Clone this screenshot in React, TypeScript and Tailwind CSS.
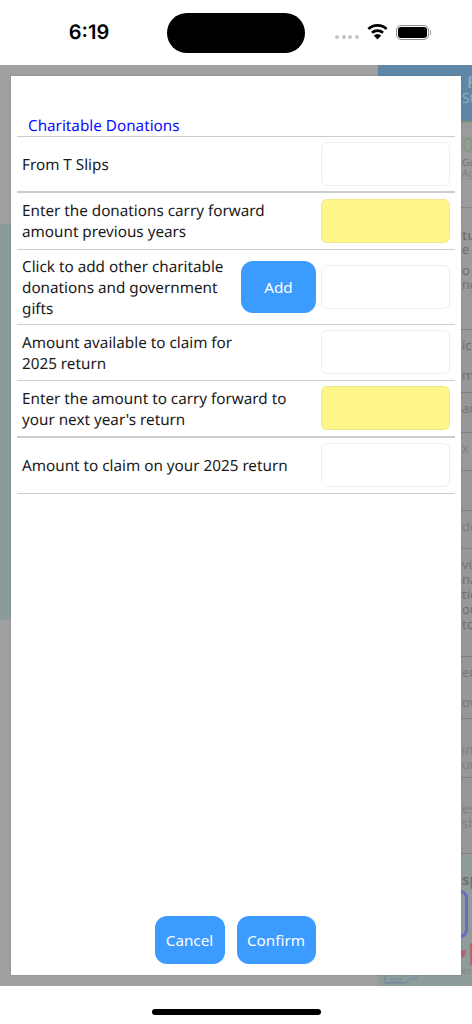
import React from "react";

const font = "font-['Noto_Sans',sans-serif] [text-rendering:geometricPrecision]";

const Field = ({ yellow = false, nudge = false }: { yellow?: boolean; nudge?: boolean }) => (
  <div
    className={`h-[44px] w-[129px] shrink-0 rounded-[6px] border ${nudge ? "mb-[1px]" : ""} ${
      yellow ? "border-[#f0e98c] bg-[#fff68a]" : "border-[#eeeeee] bg-white"
    }`}
  />
);

const Row = ({
  children,
  height,
  thick = false,
  yellow = false,
  nudge = false,
  action,
}: {
  children: React.ReactNode;
  height: string;
  thick?: boolean;
  yellow?: boolean;
  nudge?: boolean;
  action?: React.ReactNode;
}) => (
  <div className={`flex items-center px-[5px] border-[#cccccc] ${height} ${thick ? "border-b-2" : "border-b"}`}>
    <div className="flex-1 pt-[2px] text-[15.25px] leading-[21px] text-[#1a1a1a]">{children}</div>
    {action}
    <Field yellow={yellow} nudge={nudge} />
  </div>
);

const BlueButton = ({ label, width }: { label: string; width: string }) => (
  <button className={`h-[48px] ${width} rounded-[12px] bg-[#3b9bff] text-[15.25px] text-white`}>{label}</button>
);

// what shows of the dimmed page behind the dialog, right hand side
const strip = [
  { h: "h-[63px]", bg: "bg-[#989898]", text: "ic\n\nm", color: "text-[#707070]" },
  { h: "h-[40px]", bg: "bg-[#979797]", text: "ac", color: "text-[#777777]" },
  { h: "h-[38px]", bg: "bg-[#999999]", text: "x", color: "text-[#808080]" },
  { h: "h-[40px]", bg: "bg-[#979797]", text: "", color: "text-[#808080]" },
  { h: "h-[38px]", bg: "bg-[#979797]", text: "dd", color: "text-[#808080]" },
  { h: "h-[108px]", bg: "bg-[#989898]", text: "vid\nna\ntic\nou\nto", color: "text-[#707070]" },
  { h: "h-[62px]", bg: "bg-[#979797]", text: "en\n\nov", color: "text-[#777777]" },
  { h: "h-[59px]", bg: "bg-[#979797]", text: "\nım\nur", color: "text-[#808080]" },
  { h: "h-[76px]", bg: "bg-[#979797]", text: "\nes\nshr", color: "text-[#808080]" },
];

const Backdrop = () => (
  <div className="flex h-[921px] overflow-hidden">
    <div className="flex w-[378px] shrink-0 flex-col">
      <div className="h-[159px] bg-[#a0a0a0]" />
      <div className="h-[396px] bg-[#8b9b9c]" />
      <div className="flex-1 bg-[#a0a0a0]" />
    </div>
    <div className="flex flex-1 flex-col bg-[#8f9c9c]">
      <div className="h-[56px] shrink-0 overflow-hidden whitespace-pre bg-[#5f87a5] pl-[84px] pt-[8px] text-[#8fa9bd]">
        <div className="pl-[5px] text-[16px] font-semibold leading-[18px]">F</div>
        <div className="text-[14px] leading-[15px]">Sta</div>
      </div>
      <div className="h-[86px] shrink-0 overflow-hidden whitespace-pre border-t-2 border-[#7f987f] bg-[#9b9b9b] pl-[84px] pt-[9px] text-[#7d9a7d]">
        <div className="text-[20px] leading-[25px]">0</div>
        <div className="text-[10px] leading-[11px] text-[#777777]">Ge</div>
        <div className="text-[10px] leading-[11px] text-[#808080]">Ag</div>
      </div>
      <div className="h-[122px] shrink-0 overflow-hidden whitespace-pre border-t border-[#888888] bg-[#9a9a9a] pl-[84px] pt-[20px] text-[13px] leading-[14px] text-[#707070]">
        <div className="font-semibold">tu</div>
        <div>e in</div>
        <div className="mt-[7px]">o y</div>
        <div>ng</div>
      </div>
      {strip.map((s, i) => (
        <div
          key={i}
          className={`${s.h} ${s.bg} ${s.color} shrink-0 overflow-hidden whitespace-pre border-t border-[#808080] pl-[84px] pt-[8px] text-[13px] leading-[15px]`}
        >
          {s.text}
        </div>
      ))}
      <div className="flex-1 border-t border-[#808080]">
        <div className="ml-[84px] mt-[16px] text-[15px] font-bold leading-[20px] text-[#707070]">sp</div>
        <div className="ml-[50px] h-[48px] w-[40px] rounded-[8px] border-[3px] border-[#6a6cc0]" />
        <div className="ml-[83px] mt-[5px] flex h-[22px] items-start gap-[4px]">
          <svg width="5" height="8" viewBox="0 0 5 8" className="mt-[7px] shrink-0" fill="#b5646a">
            <path d="M0 0h5v4L2 8 0 5z" />
          </svg>
          <div className="h-[22px] w-[6px] shrink-0 bg-[#b5646a]" />
        </div>
        <div className="ml-[84px] text-[10px] leading-[10px] text-[#808a8a]">er</div>
        <svg width="40" height="11" viewBox="0 0 40 11" className="ml-[6px]" fill="none" stroke="#6f84a0" strokeWidth="1">
          <path d="M1 0v8h21l4-4h6V0M6 4h12M6 7h12" />
        </svg>
      </div>
    </div>
  </div>
);

const Wifi = () => (
  <svg width="21" height="17" viewBox="0 0 21 17" fill="none" stroke="#000" strokeWidth="2.8">
    <path d="M1.400 6A13.500 13.500 0 0 1 19.600 6" />
    <path d="M5 9.800A8.200 8.200 0 0 1 16 9.800" />
    <path d="M10.500 16.600L6.800 12.500A5.300 5.300 0 0 1 14.200 12.500Z" fill="#000" stroke="none" />
  </svg>
);

export default function App() {
  return (
    <div className={`relative h-[1024px] w-[472px] overflow-hidden bg-white ${font}`}>
      {/* STATUS BAR */}
      <div className="flex h-[65px] items-center">
        <div className="w-[178px] pb-[1px] text-center font-['Inter',sans-serif] text-[20px] font-semibold text-black">6:19</div>
        <div className="ml-[-11px] h-[40px] w-[138px] rounded-[20px] bg-black" />
        <div className="ml-[30px] flex w-[24px] justify-between pt-[9px]">
          <span className="h-[4px] w-[4px] rounded-full bg-[#c4c4c4]" />
          <span className="h-[4px] w-[4px] rounded-full bg-[#c4c4c4]" />
          <span className="h-[4px] w-[4px] rounded-full bg-[#c4c4c4]" />
          <span className="h-[4px] w-[4px] rounded-full bg-[#c4c4c4]" />
        </div>
        <div className="ml-[8px] mb-[2px]">
          <Wifi />
        </div>
        <div className="ml-[8px] mb-[1px] flex items-center">
          <div className="h-[15px] w-[33px] rounded-[5px] border-[1.5px] border-[#8e8e8e] p-[1px]">
            <div className="h-full w-full rounded-[3px] bg-black" />
          </div>
          <div className="ml-[0.5px] h-[5px] w-[1.5px] rounded-r-full bg-[#9a9a9a]" />
        </div>
      </div>

      <Backdrop />

      {/* HOME BAR */}
      <div className="flex h-[38px] justify-center pt-[23px]">
        <div className="h-[6px] w-[169px] rounded-full bg-black" />
      </div>

      {/* DIALOG */}
      <div className="absolute left-[11px] top-[76px] flex h-[899px] w-[450px] flex-col bg-white px-[6px] shadow-[0_0_1px_rgba(0,0,0,0.3)]">
        <div className="flex h-[61px] items-end border-b border-[#cccccc] pl-[11px] text-[15.25px] leading-[19px] text-[#0a0aff]">
          Charitable Donations
        </div>
        <Row height="h-[56px]" thick>From T Slips</Row>
        <Row height="h-[57px]" yellow>
          Enter the donations carry forward
          <br />
          amount previous years
        </Row>
        <Row
          height="h-[75px]"
          action={
            <button className="mr-[5px] h-[52px] w-[75px] shrink-0 rounded-[12px] bg-[#3b9bff] text-[15.25px] text-white">Add</button>
          }
        >
          Click to add other charitable
          <br />
          donations and government
          <br />
          gifts
        </Row>
        <Row height="h-[56px]" nudge>
          Amount available to claim for
          <br />
          2025 return
        </Row>
        <Row height="h-[57px]" thick yellow nudge>
          Enter the amount to carry forward to
          <br />
          your next year's return
        </Row>
        <Row height="h-[56px]" nudge>Amount to claim on your 2025 return</Row>
        <div className="flex-1" />
        <div className="flex justify-center gap-[12px] pb-[11px] pr-[2px]">
          <BlueButton label="Cancel" width="w-[70px]" />
          <BlueButton label="Confirm" width="w-[79px]" />
        </div>
      </div>
    </div>
  );
}
